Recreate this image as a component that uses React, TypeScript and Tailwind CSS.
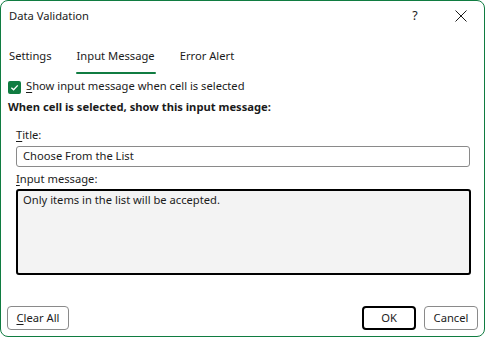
const font = { fontFamily: '"Segoe UI", "Noto Sans", sans-serif' };

function Tab({ label, active }: { label: string; active?: boolean }) {
  return (
    <div className="flex flex-col items-center">
      <span className="text-[#1b1b1b] leading-[16px]">{label}</span>
      <div className={active ? "mt-[8px] h-[2px] w-[calc(100%+2px)] bg-[#107c41] rounded-full" : "mt-[8px] h-[2px] w-full bg-transparent"} />
    </div>
  );
}

export default function App() {
  return (
    <div className="w-[486px] h-[338px] bg-white text-[11.2px] text-[#1b1b1b]" style={font}>
      <div className="w-[485px] h-[337px] border border-[#107c41] rounded-[8px] flex flex-col bg-white overflow-hidden">
        {/* title bar */}
        <div className="h-[31px] flex items-center pl-[8px] pr-[17px]">
          <span className="flex-1 pb-[1px]">Data Validation</span>
          <span className="w-[10px] text-center mr-[35px] text-[12.5px] pb-[1px]">?</span>
          <svg width="12" height="12" viewBox="0 0 12 12" className="mb-[1px]">
            <path d="M0.5 0.5 L11.5 11.5 M11.5 0.5 L0.5 11.5" stroke="#1b1b1b" strokeWidth="1" fill="none" />
          </svg>
        </div>

        {/* tabs */}
        <div className="flex gap-[25px] pl-[8px] mt-[16px]">
          <Tab label="Settings" />
          <Tab label="Input Message" active />
          <Tab label="Error Alert" />
        </div>

        {/* checkbox */}
        <div className="flex items-center gap-[5px] pl-[7px] mt-[6px] h-[14px]">
          <div className="w-[13px] h-[13px] rounded-[2px] bg-[#107c41] flex items-center justify-center">
            <svg width="9" height="9" viewBox="0 0 10 10">
              <path d="M1.5 5.2 L4 7.5 L8.6 2.6" fill="none" stroke="white" strokeWidth="1.5" />
            </svg>
          </div>
          <span className="pb-[1px]">
            <span className="underline underline-offset-2">S</span>how input message when cell is selected
          </span>
        </div>

        <div className="pl-[7px] mt-[5px] font-bold leading-[16px]">
          When cell is selected, show this input message:
        </div>

        <div className="px-[15px] mt-[12px] flex flex-col">
          <span className="leading-[16px]">
            <span className="underline underline-offset-2">T</span>itle:
          </span>
          <div className="mt-[3px] h-[21px] w-[454px] border border-[#8a8a8a] rounded-[3px] flex items-center pl-[6px]">
            Choose From the List
          </div>
          <span className="leading-[16px] mt-[4px]">
            <span className="underline underline-offset-2">I</span>nput message:
          </span>
          <div className="mt-[2px] h-[86px] w-[455px] border-2 border-black rounded-[3px] bg-[#f3f3f3] pl-[5px] pt-[1px] leading-[16px]">
            Only items in the list will be accepted.
          </div>
        </div>

        <div className="flex-1" />

        {/* buttons */}
        <div className="flex items-center px-[6px] mb-[6px]">
          <button className="h-[24px] w-[62px] border border-[#8a8a8a] rounded-[4px] bg-white">
            <span className="underline underline-offset-2">C</span>lear All
          </button>
          <div className="flex-1" />
          <button className="h-[24px] w-[54px] border-2 border-black rounded-[4px] bg-white mr-[8px]">
            OK
          </button>
          <button className="h-[24px] w-[54px] border border-[#8a8a8a] rounded-[4px] bg-white">
            Cancel
          </button>
        </div>
      </div>
    </div>
  );
}
